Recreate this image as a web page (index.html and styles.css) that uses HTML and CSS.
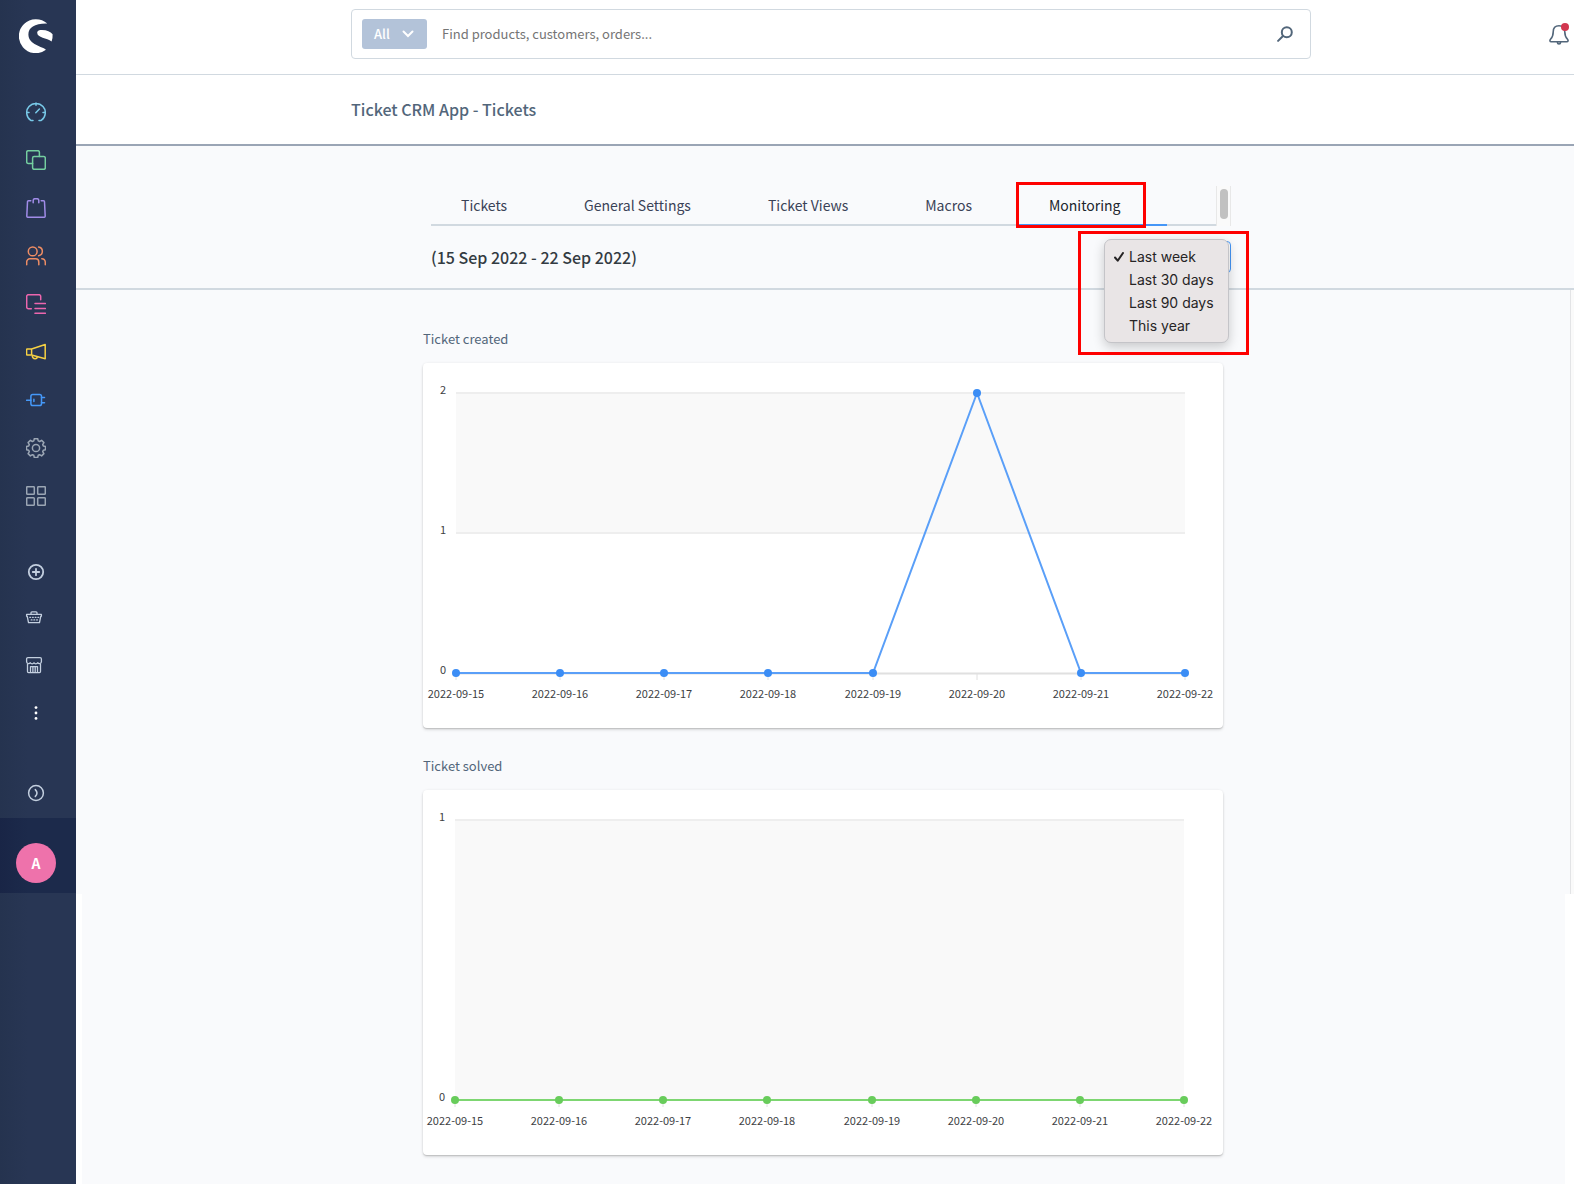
FILE: index.html
```html
<!DOCTYPE html>
<html lang="en">
<head>
<meta charset="utf-8">
<meta name="viewport" content="width=device-width, initial-scale=1">
<title>Ticket CRM App - Tickets</title>
<link rel="stylesheet" href="styles.css">
</head>
<body>
<aside class="sidebar">
  <a class="logo" href="#" aria-label="Home">
    <svg width="34" height="34" viewBox="0 0 34 34"><path d="M28.3 4.6A17 17 0 1 0 27 30.8C24 27.5 9.4 26 9.4 15.5C9.4 8.5 16 4.3 28.3 4.6z"/><path d="M18.2 13.8C18.2 11.5 20.5 11 23 11C28 11 31.5 12.8 33.6 15.3Q33.9 19 32.6 22.4C28 19 18.2 19 18.2 13.8z"/></svg>
  </a>
  <nav class="nav" aria-label="Main">
    <a class="nav-item c-cyan" href="#" aria-label="Dashboard"><svg class="icon" viewBox="0 0 20 20"><path d="M7 18.4H4.8A9.3 9.3 0 1 1 15.2 18.4H13M10 1v2.2M.8 10.4H3M17 10.4h2.2M9.8 10.8l3.6-3.8"/></svg></a>
    <a class="nav-item c-green" href="#" aria-label="Catalogues"><svg class="icon" viewBox="0 0 20 20"><path d="M6.6 13.4H2.2a1.5 1.5 0 0 1-1.5-1.5V2.2A1.5 1.5 0 0 1 2.2.7h9.700a1.500 1.500 0 0 1 1.500 1.500V6.600"/><rect x="6.600" y="6.600" width="12.700" height="12.700" rx="1.500"/></svg></a>
    <a class="nav-item c-purple" href="#" aria-label="Orders"><svg class="icon" viewBox="0 0 20 20"><path d="M4.800 2.700H2.500a1 1 0 0 0-1 1L.8 18a1.200 1.200 0 0 0 1.200 1.300h16a1.200 1.200 0 0 0 1.200-1.300L18.500 3.700a1 1 0 0 0-1-1H15.200M7.200 4.800V2.500A1.800 1.800 0 0 1 9 .7h2a1.800 1.800 0 0 1 1.800 1.800v2.300"/></svg></a>
    <a class="nav-item c-orange" href="#" aria-label="Customers"><svg class="icon" viewBox="0 0 20 20"><circle cx="6.700" cy="5.400" r="4.400"/><path d="M.7 18.700V16a3.200 3.200 0 0 1 3.200-3.200h5.700a3.200 3.200 0 0 1 3.200 3.200v2.700M12.600 1a4.400 4.400 0 0 1 0 8.700M15.800 12.800a3.700 3.700 0 0 1 3.500 3.500v2.400"/></svg></a>
    <a class="nav-item c-pink" href="#" aria-label="Content"><svg class="icon" viewBox="0 0 20 20"><path d="M5.300 14.700H2.400a1.700 1.700 0 0 1-1.700-1.700V2.400A1.700 1.700 0 0 1 2.400.7H13a1.700 1.700 0 0 1 1.700 1.700v3.300M9 9.600h10.400M9 14.600h10.400M9 19.300h10.400"/></svg></a>
    <a class="nav-item c-yellow" href="#" aria-label="Marketing"><svg class="icon" viewBox="0 0 20 20"><path d="M5.600 7L19.200 2.500v14.200L5.600 13zM5.600 7H1a.4.4 0 0 0-.4.400v5.200a.4.4 0 0 0 .4.400h4.600M6.200 13.300c0 2 1.200 3.400 3 3.400 1.200 0 2-.8 2.300-2"/></svg></a>
    <a class="nav-item c-blue" href="#" aria-label="Extensions"><svg class="icon" viewBox="0 0 20 20"><rect x="4.900" y="4.600" width="10.600" height="11" rx="1.800"/><path d="M.6 10.200h4.300M7.900 9.200v2.400M15.500 7.600h3M15.500 12.700h3"/></svg></a>
    <a class="nav-item c-gray" href="#" aria-label="Settings"><svg class="icon" viewBox="0 0 20 20"><circle cx="10" cy="10" r="3.600"/><path d="M8.300.7h3.400l.5 2.200 1.400.6 2-1.200 2.300 2.300-1.200 2 .6 1.400 2.200.4v3.300l-2.200.5-.6 1.400 1.200 2-2.300 2.300-2-1.200-1.400.6-.5 2.200H8.300l-.5-2.200-1.400-.6-2 1.200-2.300-2.300 1.200-2-.6-1.400L.5 11.700V8.400L2.700 8l.6-1.400-1.200-2 2.300-2.300 2 1.200 1.400-.6z"/></svg></a>
    <a class="nav-item c-gray" href="#" aria-label="Modules"><svg class="icon" viewBox="0 0 20 20"><rect x=".7" y=".7" width="7.600" height="7.600" rx=".8"/><rect x="11.700" y=".7" width="7.600" height="7.600" rx=".8"/><rect x=".7" y="11.700" width="7.600" height="7.600" rx=".8"/><rect x="11.700" y="11.700" width="7.600" height="7.600" rx=".8"/></svg></a>
  </nav>
  <nav class="nav nav-extra" aria-label="Sales channels">
    <a class="nav-item nav-add" href="#" aria-label="Add sales channel"><svg class="icon" viewBox="0 0 20 20"><circle cx="10" cy="10" r="7.200"/><path d="M10 6.800v6.400M6.800 10h6.400"/></svg></a>
    <a class="nav-item nav-channel" href="#" aria-label="Storefront"><svg class="icon" viewBox="0 0 20 20"><path d="M2.600 7.400h14.800v1.800h-.6l-1.300 6.400H4.500L3.200 9.200h-.6zM7 7.200V5.800a1 1 0 0 1 1-1h4a1 1 0 0 1 1 1v1.400"/><path stroke-dasharray=".8 1.900" d="M5.800 10.300h9M7.200 12.900h6.600"/></svg></a>
    <a class="nav-item nav-channel" href="#" aria-label="Shop"><svg class="icon" viewBox="0 0 20 20"><path d="M3.500 9.300v7.300a1 1 0 0 0 1 1h11a1 1 0 0 0 1-1V9.300M2.600 6.700V4a1.300 1.300 0 0 1 1.300-1.300h12.200A1.300 1.300 0 0 1 17.400 4v2.700a2 2 0 0 1-3.700 1 2.100 2.100 0 0 1-3.700 0 2.100 2.100 0 0 1-3.700 0 2 2 0 0 1-3.700-1zM6.500 17.400v-5.800h7v5.800M8.900 11.600v5.800M11.200 11.600v5.800"/></svg></a>
    <a class="nav-item" href="#" aria-label="More"><svg class="icon dots" viewBox="0 0 20 20"><circle cx="10" cy="4.600" r="1.400"/><circle cx="10" cy="10" r="1.400"/><circle cx="10" cy="15.400" r="1.400"/></svg></a>
  </nav>
  <button class="collapse" type="button" aria-label="Expand menu"><svg class="icon" viewBox="0 0 20 20"><circle cx="10" cy="10" r="7.400"/><path d="M9.300 6.600q3.400 3.400 0 6.800"/></svg></button>
  <div class="user"><button class="avatar" type="button">A</button></div>
</aside>
<main class="main">
  <header class="topbar">
    <form class="search" role="search">
      <button class="search-type" type="button">All<svg width="12" height="8" viewBox="0 0 12 8"><path d="M1.500 1.500L6 6l4.500-4.500"/></svg></button>
      <input class="search-input" type="text" aria-label="Search" placeholder="Find products, customers, orders...">
      <button class="search-submit" type="button" aria-label="Search"><svg width="16" height="16" viewBox="0 0 16 16"><circle cx="9.800" cy="6.200" r="5"/><path d="M6 10l-4.900 4.900"/></svg></button>
    </form>
    <button class="bell" type="button" aria-label="Notifications"><svg width="20" height="22" viewBox="0 0 20 22"><path d="M10 2.700c-4 0-5.800 2.600-5.800 6.200 0 4.200-.7 5.300-2.700 7.400-1 1.300-.6 2.500.7 2.500h15.600c1.300 0 1.700-1.200.7-2.500-2-2.100-2.700-3.200-2.700-7.400 0-3.600-1.800-6.200-5.800-6.200zM8.300 19.200c.3 2.400 3.100 2.400 3.400 0"/><circle class="bell-dot" cx="16" cy="4" r="4"/></svg></button>
  </header>
  <div class="titlebar"><h1 class="title">Ticket CRM App - Tickets</h1></div>
  <section class="controls">
    <div class="controls-inner">
      <div class="tabs-row">
        <nav class="tabs" aria-label="Ticket sections">
          <a class="tab" href="#">Tickets</a>
          <a class="tab" href="#">General Settings</a>
          <a class="tab" href="#">Ticket Views</a>
          <a class="tab" href="#">Macros</a>
          <a class="tab tab-active" href="#" aria-current="page">Monitoring<span class="mark mark-tab"></span></a>
        </nav>
        <div class="tabs-scroll"><span class="tabs-thumb"></span></div>
      </div>
      <div class="range-row">
        <h2 class="range">(15 Sep 2022 - 22 Sep 2022)</h2>
        <div class="period">
          <select class="period-select" aria-label="Period"><option>Last week</option><option>Last 30 days</option><option>Last 90 days</option><option>This year</option></select>
          <ul class="menu">
            <li><button class="menu-item" type="button"><svg class="check" width="10" height="10" viewBox="0 0 10 10"><path d="M1 5.500L3.700 8.700 9 1"/></svg>Last week</button></li>
            <li><button class="menu-item" type="button">Last 30 days</button></li>
            <li><button class="menu-item" type="button">Last 90 days</button></li>
            <li><button class="menu-item" type="button">This year</button></li>
          </ul>
          <span class="mark mark-menu"></span>
        </div>
      </div>
    </div>
  </section>
  <div class="reports">
    <section class="report">
      <h3 class="report-title">Ticket created</h3>
      <div class="card">
        <svg class="chart" viewBox="0 0 800 365" role="img" aria-label="Ticket created">
          <rect class="band" x="33" y="30" width="729" height="140"/>
          <path class="grid" d="M33 30h729M33 170h729"/>
          <path class="grid axis" d="M33 310.500h729"/>
          <path class="tick" d="M33 311v6M137 311v6M241 311v6M345 311v6M450 311v6M554 311v6M658 311v6M762 311v6"/>
          <path class="line blue" d="M33 310H450L554 30 658 310H762"/>
          <g class="dot-blue"><circle cx="33" cy="310" r="4"/><circle cx="137" cy="310" r="4"/><circle cx="241" cy="310" r="4"/><circle cx="345" cy="310" r="4"/><circle cx="450" cy="310" r="4"/><circle cx="554" cy="30" r="4"/><circle cx="658" cy="310" r="4"/><circle cx="762" cy="310" r="4"/></g>
          <g class="y-label"><text x="23" y="31">2</text><text x="23" y="171">1</text><text x="23" y="311">0</text></g>
          <g class="x-label"><text x="33" y="335">2022-09-15</text><text x="137" y="335">2022-09-16</text><text x="241" y="335">2022-09-17</text><text x="345" y="335">2022-09-18</text><text x="450" y="335">2022-09-19</text><text x="554" y="335">2022-09-20</text><text x="658" y="335">2022-09-21</text><text x="762" y="335">2022-09-22</text></g>
        </svg>
      </div>
    </section>
    <section class="report">
      <h3 class="report-title">Ticket solved</h3>
      <div class="card">
        <svg class="chart" viewBox="0 0 800 365" role="img" aria-label="Ticket solved">
          <rect class="band" x="32" y="30" width="729" height="280"/>
          <path class="grid" d="M32 30h729"/>
          <path class="tick" d="M32 311v6M136 311v6M240 311v6M344 311v6M449 311v6M553 311v6M657 311v6M761 311v6"/>
          <path class="line green" d="M32 310H761"/>
          <g class="dot-green"><circle cx="32" cy="310" r="4"/><circle cx="136" cy="310" r="4"/><circle cx="240" cy="310" r="4"/><circle cx="344" cy="310" r="4"/><circle cx="449" cy="310" r="4"/><circle cx="553" cy="310" r="4"/><circle cx="657" cy="310" r="4"/><circle cx="761" cy="310" r="4"/></g>
          <g class="y-label"><text x="22" y="31">1</text><text x="22" y="311">0</text></g>
          <g class="x-label"><text x="32" y="335">2022-09-15</text><text x="136" y="335">2022-09-16</text><text x="240" y="335">2022-09-17</text><text x="344" y="335">2022-09-18</text><text x="449" y="335">2022-09-19</text><text x="553" y="335">2022-09-20</text><text x="657" y="335">2022-09-21</text><text x="761" y="335">2022-09-22</text></g>
        </svg>
      </div>
    </section>
  </div>
</main>
</body>
</html>
```
FILE: styles.css
```css
* { box-sizing: border-box; }
body {
  margin: 0;
  padding-right: 4px;
  min-height: 100vh;
  display: flex;
  background: #fff;
  font-family: "Noto Sans CJK SC", "Noto Sans", sans-serif;
  font-size: 14px;
  line-height: 20px;
}
button { border: 0; padding: 0; background: none; font: inherit; color: inherit; }
a { color: inherit; text-decoration: none; }
h1, h2, h3, ul { margin: 0; padding: 0; list-style: none; }
svg { display: block; flex: none; fill: none; }

.sidebar {
  flex: none;
  width: 76px;
  background: linear-gradient(90deg, #25334f 0, #283654 28px);
  color: #c3cfdf;
}
.logo { display: block; height: 88px; padding: 19px 0 0 19px; }
.logo svg { fill: #fff; }
.nav { display: flex; flex-direction: column; }
.nav-item { height: 48px; display: flex; align-items: center; padding-left: 26px; }
.icon { width: 20px; height: 20px; stroke: currentColor; stroke-width: 1.5; stroke-linecap: round; stroke-linejoin: round; }
.dots { fill: #fff; stroke: none; }
.nav-extra { margin-top: 31px; }
.nav-extra .nav-add { height: 42px; }
.nav-add .icon { stroke-width: 1.8; }
.nav-channel { padding-left: 24px; }
.nav-channel .icon { stroke-width: 1.3; }
.collapse { display: flex; align-items: center; width: 100%; height: 50px; margin: 31px 0 0; padding-left: 26px; }
.c-cyan { color: #78c9e8; }
.c-green { color: #74cfa0; }
.c-purple { color: #a18ce8; }
.c-orange { color: #ee8d64; }
.c-pink { color: #ec66ae; }
.c-yellow { color: #f6d143; }
.c-blue { color: #4598f8; }
.c-gray { color: #9ba6b4; }
.user { height: 75px; padding: 25px 16px; background: linear-gradient(90deg, #192546, #1c2a4b 28px); }
.avatar { width: 40px; height: 40px; border-radius: 50%; background: #ee72ab; color: #fff; font-weight: 700; }

.main { flex: 1; min-width: 0; }
.topbar {
  display: grid;
  grid-template-columns: 1fr minmax(0, 960px) 1fr;
  height: 75px;
  padding: 9px 0 0 12px;
  border-bottom: 1px solid #d1d9e0;
  color: #52667a;
}
.search { grid-column: 2; display: flex; align-items: center; height: 50px; padding: 0 17px 0 10px; border: 1px solid #d1d9e0; border-radius: 4px; }
.search-type { display: flex; align-items: center; gap: 12px; width: 65px; height: 30px; padding-left: 12px; border-radius: 3px; background: #b3c3d9; color: #fff; font-size: 13px; font-weight: 500; }
.search-type svg { stroke: #fff; stroke-width: 2; stroke-linecap: round; }
.search-input { flex: 1; min-width: 0; padding: 0 15px; border: 0; outline: 0; background: none; font: inherit; font-size: 13px; }
.search-input::placeholder { color: #757575; opacity: 1; }
.search-submit svg { stroke: #52667a; stroke-width: 2; stroke-linecap: round; }
.bell { justify-self: end; align-self: start; margin: 14px 5px 0 0; }
.bell svg { stroke: #52667a; stroke-width: 1.6; }
.bell .bell-dot { fill: #d2374f; stroke: none; }

.titlebar { height: 71px; display: flex; justify-content: center; align-items: center; padding: 0 0 2px 12px; border-bottom: 2px solid #9aa5b5; }
.title { width: 960px; font-size: 16px; line-height: 24px; font-weight: 500; color: #52667a; }

.controls { padding: 40px 0 0 12px; border-bottom: 2px solid #d1d9e0; background: #f9fafc; }
.controls-inner { max-width: 800px; margin: 0 auto; }
.tabs-row { display: flex; height: 40px; }
.tabs { flex: 1; display: flex; border-bottom: 2px solid #d1d9e0; }
.tab { position: relative; height: 40px; padding: 0 47px 0 30px; line-height: 38px; color: #3a4257; white-space: nowrap; }
.tab-active { color: #20252d; border-bottom: 2px solid #4596f7; }
.tabs-scroll { width: 15px; padding: 3px 0 0 3px; border: solid #e8e8e8; border-width: 0 1px; background: #fafafa; }
.tabs-thumb { display: block; width: 8px; height: 30px; border-radius: 4px; background: #c1c1c1; }
.range-row { display: flex; justify-content: space-between; align-items: flex-start; height: 62px; padding-top: 15px; }
.range { font-size: 16px; line-height: 32px; font-weight: 500; color: #333b42; }
.period { position: relative; }
.period-select { display: block; width: 122px; height: 32px; border: 1px solid #4596f7; border-radius: 4px; background: #fff; font: inherit; }
.menu {
  position: absolute; z-index: 2; top: -2px; right: 2px;
  width: 125px; padding: 5px 0; border: 1px solid #c4c4c8; border-radius: 7px;
  background: #e9e5e6; box-shadow: 0 4px 12px rgba(0, 0, 0, .2);
  font-family: Inter, sans-serif; font-size: 14px;
}
.menu-item { position: relative; display: block; width: 100%; height: 23px; padding-left: 24px; text-align: left; line-height: 23px; color: #262425; }
.check { position: absolute; left: 9px; top: 7px; stroke: #262425; stroke-width: 2; stroke-linecap: round; stroke-linejoin: round; }
.mark { position: absolute; z-index: 3; border: 3px solid #fe0000; pointer-events: none; }
.mark-tab { top: -4px; left: -3px; width: 130px; height: 46px; }
.mark-menu { top: -10px; right: -18px; width: 171px; height: 124px; }

.reports {
  position: relative;
  display: grid;
  gap: 26px;
  padding: 37px 4px 29px 0;
  background:
    linear-gradient(#f9fafc, #f9fafc) 0 0 / 100% 604px no-repeat,
    linear-gradient(#f9fafc, #f9fafc) 6px 0 / calc(100% - 15px) 100% no-repeat;
}
.reports::after { content: ""; position: absolute; top: 0; right: 0; width: 3px; height: 604px; border-left: 1px solid #e3e4e6; background: #fafafa; }
.report { width: 100%; max-width: 800px; margin: 0 auto; }
.report-title { margin-bottom: 12px; font-size: 13px; line-height: 24px; font-weight: 400; color: #52667a; }
.card { border-radius: 4px; background: #fff; box-shadow: 0 1px 1px rgba(0, 0, 0, .12), 0 2px 3px rgba(0, 0, 0, .12), 0 0 3px rgba(0, 0, 0, .06); }
.chart { width: 100%; height: auto; }
.band { fill: #f9f9f9; }
.grid { stroke: #eee; stroke-width: 2; }
.axis { stroke: #e0e0e0; }
.tick { stroke: #e0e0e0; }
.line { stroke-width: 2; }
.blue { stroke: #5a9ff8; }
.green { stroke: #7dd671; }
.dot-blue { fill: #3b8df5; }
.dot-green { fill: #68cc5b; }
.y-label, .x-label { fill: #3d4144; font-size: 11px; }
.y-label { text-anchor: end; }
.x-label { text-anchor: middle; }
```
